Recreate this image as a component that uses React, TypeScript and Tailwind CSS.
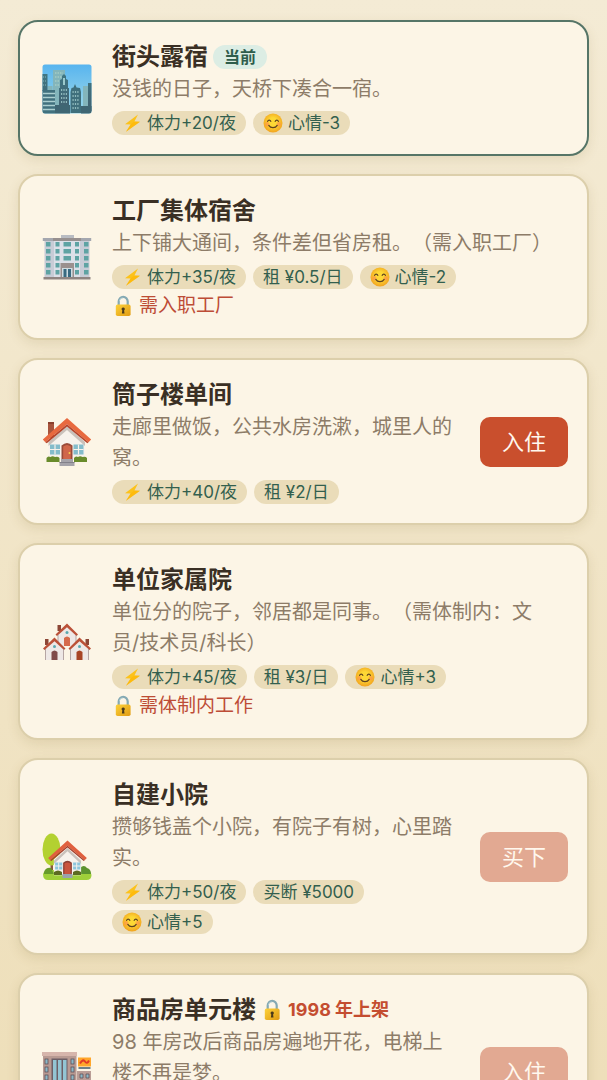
import React from 'react';

type IconName = 'city' | 'dorm' | 'house' | 'houses' | 'garden' | 'mall';

interface Chip {
  icon?: 'bolt' | 'smile';
  text: string;
}

interface Home {
  name: string;
  icon: IconName;
  desc: string;
  chips: Chip[];
  current?: boolean;
  notice?: string;
  lock?: string;
  action?: { label: string; disabled: boolean };
  tall?: boolean;
}

const homes: Home[] = [
  {
    name: '街头露宿',
    icon: 'city',
    desc: '没钱的日子，天桥下凑合一宿。',
    chips: [
      { icon: 'bolt', text: '体力+20/夜' },
      { icon: 'smile', text: '心情-3' },
    ],
    current: true,
  },
  {
    name: '工厂集体宿舍',
    icon: 'dorm',
    desc: '上下铺大通间，条件差但省房租。（需入职工厂）',
    chips: [
      { icon: 'bolt', text: '体力+35/夜' },
      { text: '租 ¥0.5/日' },
      { icon: 'smile', text: '心情-2' },
    ],
    lock: '需入职工厂',
  },
  {
    name: '筒子楼单间',
    icon: 'house',
    desc: '走廊里做饭，公共水房洗漱，城里人的\n窝。',
    chips: [{ icon: 'bolt', text: '体力+40/夜' }, { text: '租 ¥2/日' }],
    action: { label: '入住', disabled: false },
  },
  {
    name: '单位家属院',
    icon: 'houses',
    desc: '单位分的院子，邻居都是同事。（需体制内：文\n员/技术员/科长）',
    chips: [
      { icon: 'bolt', text: '体力+45/夜' },
      { text: '租 ¥3/日' },
      { icon: 'smile', text: '心情+3' },
    ],
    lock: '需体制内工作',
  },
  {
    name: '自建小院',
    icon: 'garden',
    desc: '攒够钱盖个小院，有院子有树，心里踏\n实。',
    chips: [
      { icon: 'bolt', text: '体力+50/夜' },
      { text: '买断 ¥5000' },
      { icon: 'smile', text: '心情+5' },
    ],
    action: { label: '买下', disabled: true },
  },
  {
    name: '商品房单元楼',
    icon: 'mall',
    desc: '98 年房改后商品房遍地开花，电梯上\n楼不再是梦。',
    chips: [],
    notice: '1998 年上架',
    action: { label: '入住', disabled: true },
    tall: true,
  },
];

function BoltIcon() {
  return (
    <svg viewBox="0 0 20 20" className="h-5 w-5 shrink-0" aria-hidden="true">
      <path d="M16 1.500 3 11.200l5.600.3-4.600 7.300L18 8.800l-5.600-.3z" fill="#fcc21b" />
      <path d="m12.400 8.500 5.600.3L4 18.800l4.600-7.300z" fill="#ffb300" opacity=".5" />
    </svg>
  );
}

function SmileIcon() {
  return (
    <svg viewBox="0 0 20 20" className="h-5 w-5 shrink-0" aria-hidden="true">
      <defs>
        <radialGradient id="smile-face" cx=".5" cy=".45" r=".55">
          <stop offset=".4" stopColor="#fdd835" />
          <stop offset="1" stopColor="#f2a31f" />
        </radialGradient>
      </defs>
      <circle cx="10" cy="10" r="9.5" fill="url(#smile-face)" />
      <circle cx="4.3" cy="11.2" r="2.2" fill="#ff8a50" opacity=".55" />
      <circle cx="15.7" cy="11.2" r="2.2" fill="#ff8a50" opacity=".55" />
      <g fill="none" stroke="#5f4220" strokeWidth="1.2" strokeLinecap="round">
        <path d="M4.6 8.4c.6-1.8 2.6-1.8 3.2 0M12.2 8.4c.6-1.8 2.6-1.8 3.2 0" />
        <path d="M5.8 12.4c1.8 3 6.6 3 8.4 0" />
      </g>
    </svg>
  );
}

function LockIcon() {
  return (
    <svg viewBox="0 0 22 22" className="h-[22px] w-[22px] shrink-0" aria-hidden="true">
      <defs>
        <linearGradient id="lock-body" x1="0" y1="0" x2="1" y2="1">
          <stop offset="0" stopColor="#fdd23a" />
          <stop offset="1" stopColor="#e09a12" />
        </linearGradient>
      </defs>
      <path d="M6.700 11V6.600a4.500 4.800 0 0 1 9 0V11" fill="none" stroke="#84a9b3" strokeWidth="2.2" />
      <path d="M7.200 6.200a4 4 0 0 1 4-3.400" fill="none" stroke="#b9d3d8" strokeWidth=".8" />
      <rect x="3.800" y="9.600" width="14.800" height="11.400" rx="1.800" fill="url(#lock-body)" />
      <path d="M11.200 12.400a1.700 1.700 0 0 1 .9 3.100l.4 3H9.900l.4-3a1.700 1.700 0 0 1 .9-3.100z" fill="#4b3a1b" />
    </svg>
  );
}

function CityIcon() {
  return (
    <>
      <defs>
        <linearGradient id="city-sky" x1="0" y1="0" x2="0" y2="1">
          <stop offset="0" stopColor="#57b4ef" />
          <stop offset=".7" stopColor="#8dd0ea" />
        </linearGradient>
        <linearGradient id="city-front" x1="0" y1="0" x2="0" y2="1">
          <stop offset="0" stopColor="#3f7683" />
          <stop offset="1" stopColor="#426271" />
        </linearGradient>
        <clipPath id="city-clip">
          <rect x=".5" y=".5" width="49" height="49" rx="2.5" />
        </clipPath>
      </defs>
      <g clipPath="url(#city-clip)">
        <rect width="50" height="50" fill="url(#city-sky)" />
        <path d="M11 6h12v36H11zM5.500 22h5v20h-5zM41 22h5v22h-5z" fill="#83b5bb" />
        <path d="M13 9h8M13 13h8M13 17h8M13 21h8" stroke="#a5cbc5" strokeWidth="1.500" strokeDasharray="1.500 1" />
        <path d="M0 10h5.500v17H0zM46 19h4v28h-4z" fill="url(#city-front)" />
        <path d="M1 13h4M1 17h4M1 21h4" stroke="#86b7bb" strokeWidth="1.200" strokeDasharray="1 1" />
        <path d="M17 24h1v-8l2-1v-3l2-2 2 2v3l2 1v8h1v20H17z" fill="url(#city-front)" />
        <path d="M21 14h2v7h-2z" fill="#9bc9cc" />
        <path d="M19 26h6M19 30h6M19 34h6M19 38h6" stroke="#a8d2d2" strokeWidth="1.400" strokeDasharray="1.200 1.200" />
        <path d="M28.500 28l1-4 2-.5 1.500-3.500 1.500 3.500 3.500.5 1 4V49H28.500z" fill="#3f6f7c" />
        <path d="M30.500 28h7M30.500 32h7M30.500 36h7M30.500 40h7M30.500 44h7" stroke="#a8d2d2" strokeWidth="1.400" strokeDasharray="1.200 1.200" />
        <path d="M0 26h13v24H0z" fill="#41717e" />
        <path d="M1 29.500h12M1 33.500h12M1 37.500h12M1 41.500h12M1 45.500h12" stroke="#abcfd0" strokeWidth="1.300" />
        <path d="M13 41h15v9H13zM39 42h11v8H39z" fill="#3f6673" />
      </g>
    </>
  );
}

function DormIcon() {
  return (
    <>
      <path d="M19 2h13v4H19z" fill="#b9bcc2" />
      <path d="M.8 5h48.400v3H.8z" fill="#a4a7af" />
      <path d="M2.500 8h45v37h-45z" fill="#c7ccd6" />
      <path d="M11 5h28v3H11z" fill="#97908f" />
      <path d="M12 8h26v37H12z" fill="#dce0e8" />
      <g fill="#5ea3a3">
        {[9, 16, 23, 30, 37].map(y => (
          <g key={y}>
            <rect x="4" y={y} width="4.500" height="4.500" />
            <rect x="13.500" y={y} width="4" height="4.500" />
            {y < 30 && <rect x="21.500" y={y} width="7.500" height="4.500" />}
            <rect x="33" y={y} width="4" height="4.500" />
            <rect x="42" y={y} width="4.500" height="4.500" />
          </g>
        ))}
      </g>
      <path d="M18.500 30h13.500v15H18.500z" fill="#9a908e" />
      <path d="M20 35h10.500v10H20z" fill="#cfdde2" />
      <path d="M21.500 36h3v8h-3zM26 36h3v8h-3z" fill="#396a80" />
      <path d="M1.500 44h47v2.500h-47z" fill="#8f8582" />
    </>
  );
}

function HouseIcon() {
  return (
    <>
      <path d="M6 5h6v16H6z" fill="#a8543c" />
      <path d="M6 5h6v2H6z" fill="#8b3f2d" />
      <path d="M6.500 24 25 7l18 17v19h-36.500z" fill="#f7f2ec" />
      <path d="M6.500 25 25 9l18 16v4L25 13 6.500 29z" fill="#c9c1bb" />
      <path d="M25 1 .8 22.500l2.500 2.700L25 7.200l21.500 18 2.700-2.700z" fill="#e8693f" />
      <path d="M3.300 25.200 25 7.200l21.500 18-1.200 1L25 9.500 4.800 26.200z" fill="#b6432a" />
      <path d="M8 27.500h10v10H8zM31.500 27.500h10v10h-10z" fill="#84bccb" />
      <path d="M13 27.500v10M8 32.500h10M36.500 27.500v10M31.500 32.500h10" stroke="#f7f2ec" strokeWidth="1.200" />
      <path d="M19.500 43V28.500q5.500-5 11 0V43z" fill="#9b4a39" />
      <path d="M21.200 43V29.500q3.800-3 7.600 0V43z" fill="#d0664b" />
      <circle cx="27.500" cy="36" r="1" fill="#fbd24a" />
      <path d="M4.500 45v-4q1.500-2.500 4-1 2-1.500 4.500 0 3-1 4.500 1v4zM32 45v-4q1.500-2.500 4-1 2-1.500 4.500 0 3-1 4.500 1v4z" fill="#698b2b" />
      <path d="M19 42h12v3h1.500v4h-15v-4H19z" fill="#a5a3aa" />
      <path d="M17.500 45.500h15" stroke="#83818a" strokeWidth="1" />
    </>
  );
}

function SmallHouse({ door }: { door: string }) {
  return (
    <>
      <path d="M2.500 1h3.500v6H2.500z" fill="#8c4636" />
      <path d="M3 9.500 12 2l9 7.500V22H3z" fill="#eee8e6" />
      <path d="M12-.5.500 10.500 2 12 12 3.300 21.500 12l1.500-1.500z" fill="#bb5138" />
      <circle cx="12" cy="8.500" r="1.500" fill="#5aa9b0" />
      <path d="M9 22v-8q3-3 6 0v8z" fill={door} />
      <path d="M3 11v11M21 11v11" stroke="#9b8686" strokeWidth=".7" />
    </>
  );
}

function HousesIcon() {
  return (
    <>
      <g transform="translate(13 7)">
        <SmallHouse door="#d66a4b" />
      </g>
      <g transform="translate(.5 21)">
        <SmallHouse door="#804a4a" />
      </g>
      <g transform="translate(49.500 21) scale(-1 1)">
        <SmallHouse door="#a84526" />
      </g>
    </>
  );
}

function GardenIcon() {
  return (
    <>
      <path d="M8.500 28h2.500v14H8.500z" fill="#8a5a3c" />
      <ellipse cx="9.500" cy="17.500" rx="9" ry="16" fill="#b3d131" />
      <path d="M1 42q1-4 8-4h32q8 0 8.500 5 0 5-5 5H6q-5 0-5-6z" fill="#9fcf3a" />
      <path d="M38 42v-6q4-4 7 0 4 1 4 6z" fill="#5c932f" />
      <path d="M2 40q2-5 7-4l3 6H2z" fill="#679b2c" />
      <g transform="translate(5.500 8) scale(.8)">
        <path d="M8 24 25 9l17 15v20H8z" fill="#f7f2ec" />
        <path d="M8 26 25 10l17 16v4L25 14 8 30z" fill="#c9c1bb" />
        <path d="M25 .5.8 22.500l2.500 2.700L25 7.200l21.500 18 2.700-2.700z" fill="#e0603f" />
        <path d="M3.300 25.200 25 7.200l21.500 18-1.200 1L25 9.500 4.800 26.200z" fill="#a63d2a" />
        <path d="M9.500 28h9v9h-9zM32 28h9v9h-9z" fill="#8cc5dc" />
        <path d="M14 28v9M9.500 32.500h9M36.500 28v9M32 32.500h9" stroke="#f7f2ec" strokeWidth="1.200" />
        <path d="M19.500 43V28.500q5.500-5 11 0V43z" fill="#8e4136" />
        <path d="M21.200 43V29.500q3.800-3 7.600 0V43z" fill="#c9553f" />
      </g>
      <path d="M12 43v-3q4-3 8 0v3zM31 43v-3q4-3 8 0v3z" fill="#5c6b22" />
      <path d="M20.500 42h10v4h-10z" fill="#9aa3ad" />
    </>
  );
}

function MallIcon() {
  return (
    <>
      <path d="M35 24h14v26H35z" fill="#b99d96" />
      <path d="M36.500 20h12v2h-12z" fill="#6d7f87" />
      <path d="M36 10.500h13v9H36z" fill="#ffa62b" />
      <path d="M38 16.500q3-5 5-2t4-1" fill="none" stroke="#e23b26" strokeWidth="2" />
      <path d="M1 7h33.500v43H1z" fill="#b89a92" />
      <path d="M0 5h35v4H0z" fill="#d6b5ab" />
      <path d="M9.500 11.500h16v38.500h-16z" fill="#6c5f66" />
      <path d="M11 13h3.500v37H11zM16 13h3.500v37H16zM21 13h3.500v37H21z" fill="#93c5d3" />
      <g fill="#8bb8c6" stroke="#5f5158" strokeWidth=".8">
        {[12, 20, 28, 36, 44].map(y => (
          <g key={y}>
            <rect x="3" y={y} width="3" height="5" />
            <rect x="29" y={y} width="3" height="5" />
          </g>
        ))}
        <path d="M38 27h3v4h-3zM44 27h3v4h-3zM38 34h3v4h-3zM44 34h3v4h-3z" />
      </g>
    </>
  );
}

const icons: Record<IconName, () => React.JSX.Element> = {
  city: CityIcon,
  dorm: DormIcon,
  house: HouseIcon,
  houses: HousesIcon,
  garden: GardenIcon,
  mall: MallIcon,
};

function HomeCard({ home }: { home: Home }) {
  const Icon = icons[home.icon];

  return (
    <li
      className={`flex items-center gap-5 rounded-[20px] border-2 bg-[#fcf5e6] pt-5 pr-[19px] pb-[19px] pl-[22px] shadow-[0_4px_12px_rgba(120,100,40,0.13)] ${
        home.current ? 'border-[#567567]' : 'border-[#dccfab]'
      } ${home.tall ? 'min-h-[197px]' : ''}`}
    >
      <svg viewBox="0 0 50 50" className="h-[50px] w-[50px] shrink-0" aria-hidden="true">
        <Icon />
      </svg>

      <div className="min-w-0 flex-1 self-start">
        <div className="flex h-[30px] items-center gap-[5px]">
          <h2 className="text-2xl leading-[30px] font-bold text-[#3a2f24]">{home.name}</h2>
          {home.current && (
            <span className="rounded-full bg-[#dcede4] px-[11px] text-base leading-6 font-bold text-[#2f5d4c]">
              当前
            </span>
          )}
          {home.notice && (
            <span className="flex items-center gap-[5px] text-lg leading-6 font-bold text-[#c44d30]">
              <LockIcon />
              {home.notice}
            </span>
          )}
        </div>

        <p className="mt-[2px] text-xl leading-[31px] whitespace-pre text-[#8d7c68] [text-spacing-trim:space-all]">
          {home.desc}
        </p>

        {home.chips.length > 0 && (
          <ul className="mt-[6px] flex flex-wrap gap-x-[7px] gap-y-[6px]">
            {home.chips.map(chip => (
              <li
                key={chip.text}
                className="flex h-6 items-center gap-[5px] rounded-full bg-[#eadcb9] px-[10px] text-[17px] leading-6 text-[#335f4e]"
              >
                {chip.icon === 'bolt' && <BoltIcon />}
                {chip.icon === 'smile' && <SmileIcon />}
                {chip.text}
              </li>
            ))}
          </ul>
        )}

        {home.lock && (
          <p className="mt-[3px] flex items-center gap-[5px] text-[19px] leading-[27px] text-[#bd4c36]">
            <LockIcon />
            {home.lock}
          </p>
        )}
      </div>

      {home.action && (
        <button
          type="button"
          disabled={home.action.disabled}
          className="h-[50px] shrink-0 rounded-[10px] bg-[#c94f2d] px-[22px] text-[22px] leading-7 text-[#fff8ee] disabled:bg-[#e2a992]"
        >
          {home.action.label}
        </button>
      )}
    </li>
  );
}

export default function App() {
  return (
    <main className="h-screen overflow-hidden bg-linear-to-b from-[#f4ebd5] to-[#eedfba] font-['Inter','Noto_Sans_CJK_SC',sans-serif]">
      <ul className="flex flex-col gap-[18px] px-[18px] py-5">
        {homes.map(home => (
          <HomeCard key={home.name} home={home} />
        ))}
      </ul>
    </main>
  );
}
